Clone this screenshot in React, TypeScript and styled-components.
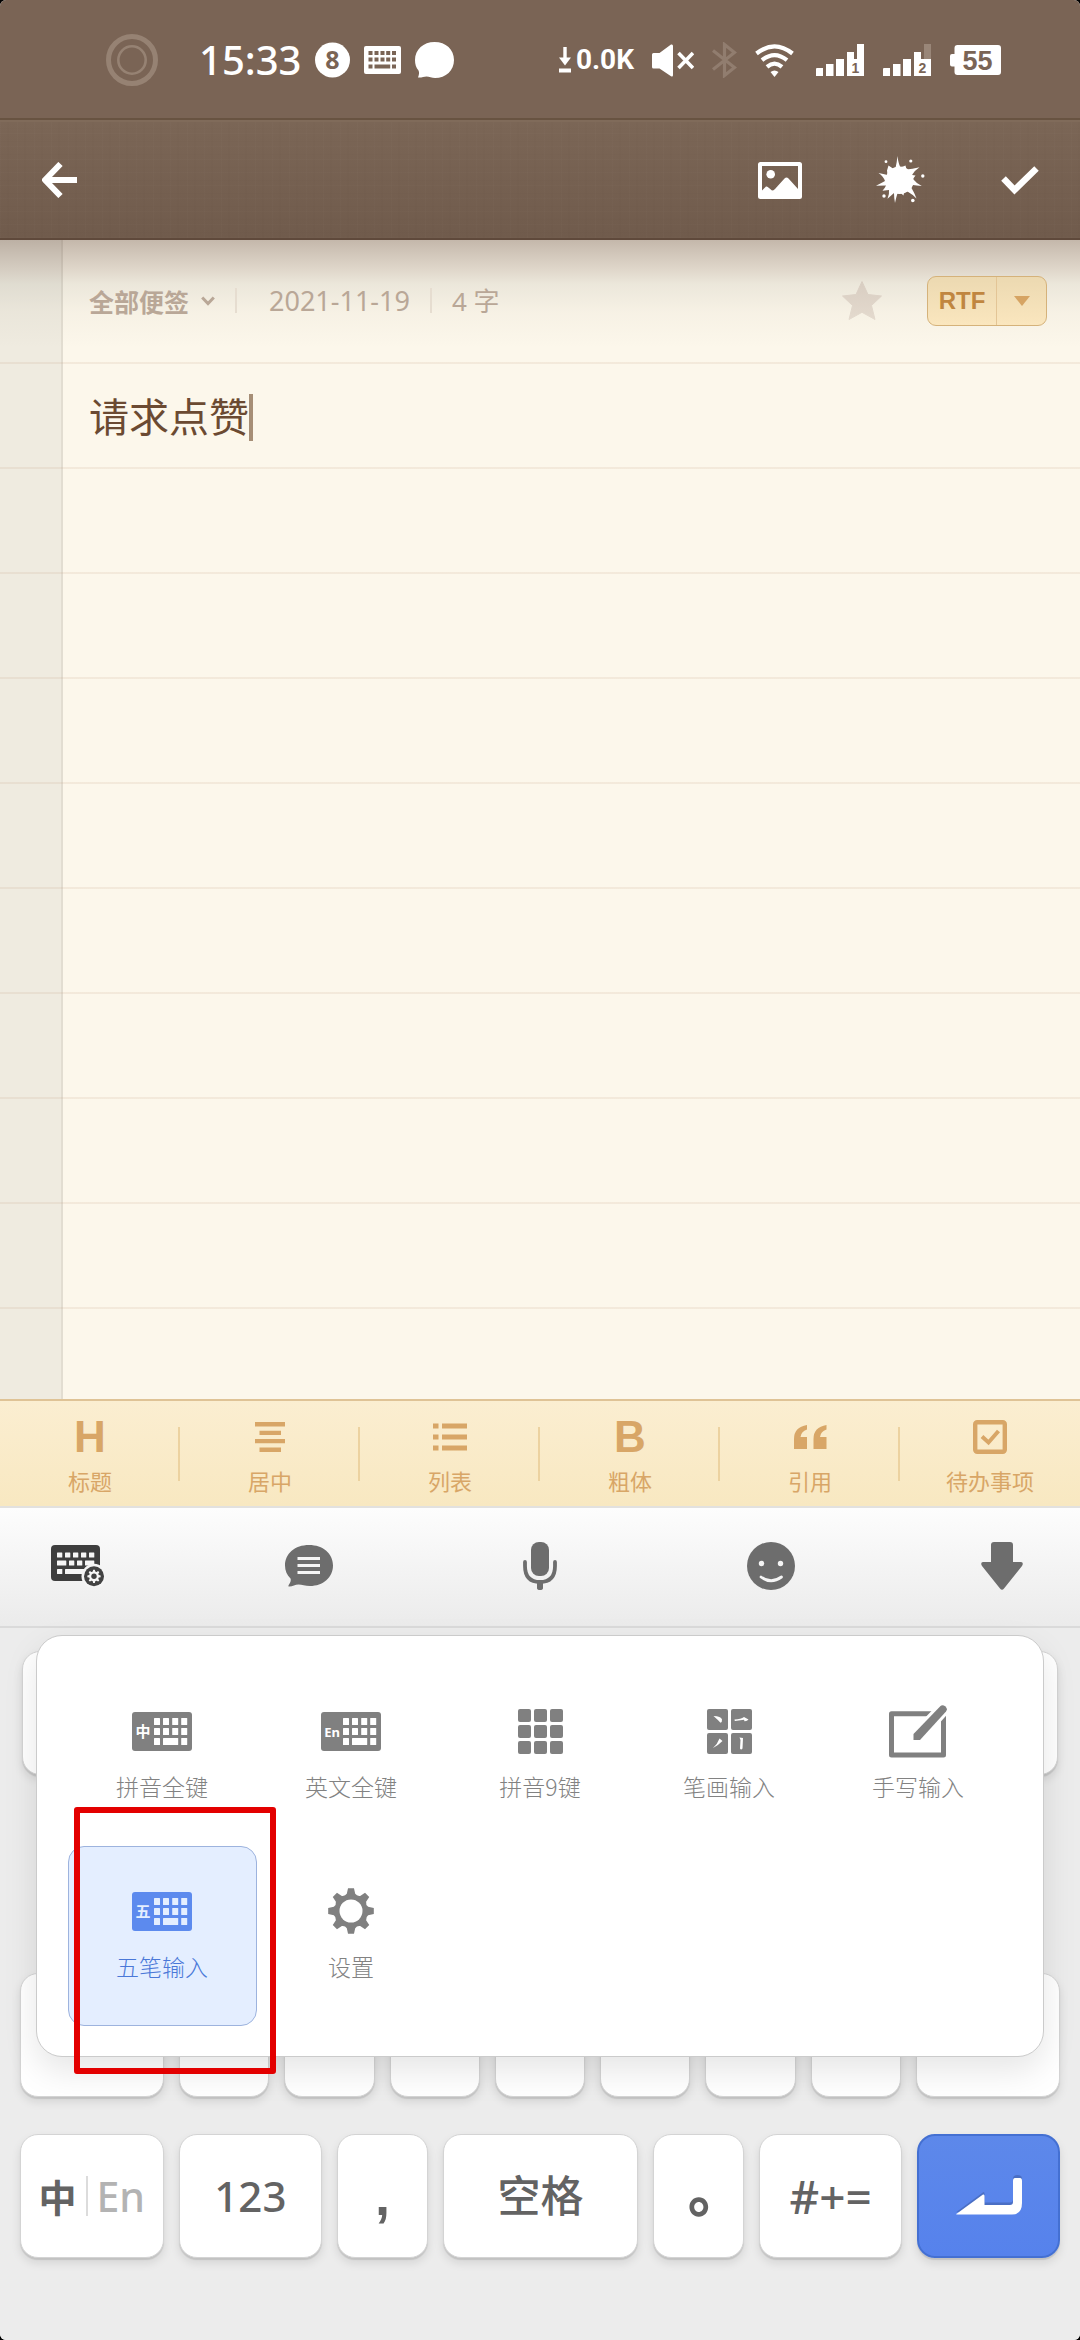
import React from "react";
import styled, { createGlobalStyle } from "styled-components";

const SANS = '"Noto Sans", "Noto Sans CJK SC", sans-serif';
const CJK = '"Noto Sans CJK SC", "Noto Sans", sans-serif';
const ARIAL = '"Liberation Sans", "Noto Sans CJK SC", sans-serif';

const GlobalStyle = createGlobalStyle`
  *, *::before, *::after { box-sizing: border-box; }
  html, body { margin: 0; padding: 0; background: #000; }
  body { font-family: ${SANS}; }
  button {
    margin: 0; padding: 0; border: 0; background: none;
    color: inherit; font: inherit; cursor: pointer;
  }
  svg { display: block; flex: none; }
`;

const Screen = styled.div`
  position: relative;
  display: flex;
  flex-direction: column;
  min-height: 100vh;
  border-radius: 6px;
  overflow: hidden;
  background: #ececec;
`;

/* ---------- status bar ---------- */

const StatusBar = styled.header`
  display: flex;
  align-items: center;
  justify-content: space-between;
  height: 120px;
  padding: 2px 79px 0 106px;
  background: #7a6455;
  border-bottom: 2px solid #685341;
  color: #fff;
`;

const StatusGroup = styled.div<{ $gap: number }>`
  display: flex;
  align-items: center;
  gap: ${(p) => p.$gap}px;
`;

const Clock = styled.time`
  font-size: 40px;
  line-height: 48px;
  font-weight: 500;
`;

const Speed = styled.span`
  display: flex;
  align-items: center;
  gap: 5px;
  font-family: Roboto, sans-serif;
  font-size: 28px;
  line-height: 32px;
  font-weight: 700;
`;

/* ---------- app toolbar ---------- */

const Toolbar = styled.nav`
  display: flex;
  justify-content: space-between;
  height: 120px;
  border-top: 2px solid #806b5a;
  border-bottom: 2px solid #5f493b;
  background:
    repeating-linear-gradient(90deg, rgba(255, 255, 255, 0.012) 0 1px, transparent 1px 7px, rgba(0, 0, 0, 0.012) 7px 9px, transparent 9px 17px),
    repeating-linear-gradient(0deg, rgba(255, 255, 255, 0.012) 0 1px, transparent 1px 5px, rgba(0, 0, 0, 0.012) 5px 6px, transparent 6px 13px),
    linear-gradient(#7b6656, #705b4c);
`;

const ToolbarActions = styled.div`
  display: flex;
`;

const ToolbarButton = styled.button`
  display: flex;
  align-items: center;
  justify-content: center;
  width: 120px;
  color: #fff;
`;

/* ---------- note ---------- */

const Paper = styled.main`
  flex: 1;
  padding-left: 89px;
  background:
    linear-gradient(
      rgba(112, 88, 74, 0.4) 0,
      rgba(112, 88, 74, 0.3) 14px,
      rgba(112, 88, 74, 0.2) 30px,
      rgba(90, 90, 74, 0.1) 44px,
      rgba(112, 100, 74, 0.04) 72px,
      transparent 108px
    ),
    repeating-linear-gradient(transparent 0 17px, rgba(190, 150, 120, 0.14) 17px 19px, transparent 19px 105px) 0 105px no-repeat,
    linear-gradient(90deg, #efebe0 61px, #e2ddd1 61px 63px, #fcf7eb 63px);
`;

const MetaRow = styled.div`
  display: flex;
  align-items: center;
  justify-content: space-between;
  height: 123px;
  padding: 0 33px 2px 0;
  color: #b9a797;
`;

const MetaInfo = styled.div`
  display: flex;
  align-items: center;
  font-size: 26px;
  line-height: 32px;
`;

const FolderButton = styled.button`
  display: flex;
  align-items: center;
  gap: 12px;
  margin-right: 20px;
  font-family: ${CJK};
  font-size: 25px;
  line-height: 32px;
  font-weight: 700;
`;

const Rule = styled.i`
  width: 2px;
  height: 25px;
  background: #e6ddd0;
`;

const DateText = styled.time`
  padding: 0 20px 0 32px;
  font-size: 27px;
`;

const CountText = styled.span`
  padding-left: 20px;
`;

const MetaActions = styled.div`
  display: flex;
  align-items: center;
  gap: 45px;
`;

const FormatSwitch = styled.div`
  display: flex;
  width: 120px;
  height: 50px;
  border: 1px solid #d5b27a;
  border-radius: 9px;
  background: linear-gradient(#ecd9b1, #fae6be);
`;

const FormatName = styled.button`
  flex: 1;
  border-right: 1px solid #e3c596;
  color: #c08640;
  font-family: ${ARIAL};
  font-size: 24px;
  line-height: 28px;
  font-weight: 700;
`;

const FormatMore = styled.button`
  display: flex;
  align-items: center;
  justify-content: center;
  width: 49px;
`;

const NoteLine = styled.div`
  display: flex;
  align-items: center;
  height: 105px;
  padding-top: 3px;
`;

const NoteText = styled.textarea`
  display: block;
  width: 160px;
  height: 60px;
  margin: 0;
  padding: 0;
  border: 0;
  outline: 0;
  resize: none;
  overflow: hidden;
  background: none;
  color: #6b4a32;
  font-family: ${CJK};
  font-size: 40px;
  line-height: 56px;
  white-space: nowrap;
`;

const Caret = styled.i`
  width: 4px;
  height: 47px;
  background: #a68e76;
`;

/* ---------- formatting bar ---------- */

const FormatBar = styled.div`
  display: grid;
  grid-template-columns: repeat(6, 1fr);
  height: 109px;
  border-top: 2px solid #dfc396;
  border-bottom: 2px solid #e2e1df;
  background: linear-gradient(#fbeed1, #f8e8c1);
`;

const FormatTool = styled.button`
  display: flex;
  flex-direction: column;
  align-items: center;
  gap: 13px;
  padding-top: 20px;
  color: #d8a667;
  background: linear-gradient(#ecd2a0, #ecd2a0) right center / 2px 54px no-repeat;

  &:last-child {
    background: none;
  }
`;

const ToolGlyph = styled.span`
  display: flex;
  align-items: center;
  justify-content: center;
  height: 32px;
  font-family: ${ARIAL};
  font-size: 44px;
  line-height: 32px;
  font-weight: 700;
`;

const ToolLabel = styled.span`
  font-family: ${CJK};
  font-size: 22px;
  line-height: 28px;
`;

/* ---------- input method ---------- */

const ImeBar = styled.div`
  display: flex;
  align-items: center;
  justify-content: space-between;
  height: 120px;
  padding: 0 48px 2px;
  border-bottom: 2px solid #dadada;
  background: linear-gradient(#fdfdfd, #ebebeb);
`;

const ImeButton = styled.button`
  display: flex;
  align-items: center;
  justify-content: center;
  width: 60px;
  height: 60px;
`;

const Keyboard = styled.section`
  position: relative;
  display: flex;
  flex-direction: column;
  gap: 37px;
  padding: 23px 20px 82px;
  background: #ececec;
`;

const KeyRow = styled.div<{ $inset?: number }>`
  display: flex;
  gap: 15px;
  padding: 0 ${(p) => p.$inset ?? 0}px;
`;

const Key = styled.button<{ $grow?: number; $accent?: boolean; $size?: number }>`
  display: flex;
  align-items: center;
  justify-content: center;
  flex: ${(p) => p.$grow ?? 90} 1 0;
  height: 124px;
  border: ${(p) => (p.$accent ? "2px solid #4470d2" : "1px solid #d4d4d4")};
  border-radius: 18px;
  background: ${(p) => (p.$accent ? "linear-gradient(#5d88ea, #5682ec)" : "#fff")};
  box-shadow: 0 2px 1px rgba(0, 0, 0, 0.1), 0 5px 10px rgba(0, 0, 0, 0.1);
  color: #636363;
  font-size: ${(p) => p.$size ?? 42}px;
  line-height: 56px;
  font-weight: 500;
`;

const LetterKey = styled(Key)`
  padding-top: 12px;
`;

const LanguageKey = styled.span`
  display: flex;
  align-items: center;
  gap: 9px;
  font-size: 41px;
`;

const Chinese = styled.span`
  font-family: ${CJK};
  font-size: 38px;
  font-weight: 700;
`;

const English = styled.span`
  color: #b3b3b3;
`;

const LanguageRule = styled.i`
  width: 2px;
  height: 40px;
  background: #dcdcdc;
`;

const Comma = styled.span`
  font-family: ${ARIAL};
  font-size: 54px;
  font-weight: 700;
`;

const FullStop = styled.span`
  width: 21px;
  padding-bottom: 18px;
  font-family: ${CJK};
  font-size: 56px;
  font-weight: 900;
`;

const ModePanel = styled.div`
  position: absolute;
  top: 7px;
  left: 36px;
  right: 36px;
  display: grid;
  grid-template-columns: repeat(5, 189px);
  justify-content: center;
  grid-auto-rows: 180px;
  padding: 30px;
  border: 1px solid #cbcbcb;
  border-radius: 26px;
  background: #fff;
  box-shadow: 0 14px 34px rgba(0, 0, 0, 0.1);
`;

const Mode = styled.button<{ $active?: boolean }>`
  display: flex;
  flex-direction: column;
  align-items: center;
  gap: 10px;
  padding-top: 34px;
  border: 1px solid ${(p) => (p.$active ? "#9db3de" : "transparent")};
  border-radius: 16px;
  background: ${(p) => (p.$active ? "#e4eeff" : "transparent")};
  color: ${(p) => (p.$active ? "#5c8aee" : "#808080")};
`;

const ModeIcon = styled.span`
  display: flex;
  align-items: center;
  justify-content: center;
  height: 60px;
`;

const ModeLabel = styled.span<{ $active?: boolean }>`
  color: ${(p) => (p.$active ? "#4a78d8" : "#828282")};
  font-family: ${CJK};
  font-size: 23px;
  line-height: 30px;
  font-weight: 300;
`;

const Highlight = styled.div`
  position: absolute;
  left: 74px;
  top: 179px;
  width: 202px;
  height: 267px;
  border: 6px solid #e30000;
  border-radius: 3px;
  pointer-events: none;
`;

/* ---------- icons ---------- */

const RingIcon = () => (
  <svg width="52" height="52" viewBox="0 0 52 52" fill="none" stroke="#968273">
    <circle cx="26" cy="26" r="23.5" strokeWidth="5" />
    <circle cx="26" cy="26" r="13.7" strokeWidth="2.6" />
  </svg>
);

const CountBadge = () => (
  <svg width="35" height="36" viewBox="0 0 35 36">
    <circle cx="17.5" cy="18" r="17.5" fill="#fff" />
    <text x="17.5" y="27" textAnchor="middle" fontFamily="Noto Sans, sans-serif" fontSize="25" fontWeight="700" fill="#7a6455">8</text>
  </svg>
);

const StatusKeyboard = () => (
  <svg width="37" height="28" viewBox="0 0 37 28">
    <rect width="37" height="28" rx="2" fill="#fff" />
    <g fill="#7a6455">
      {[4.5, 10.5, 16.5, 22.2, 28].map((x) => (
        <React.Fragment key={x}>
          <rect x={x} y="5" width="4" height="4" />
          <rect x={x} y="11.5" width="4" height="4" />
        </React.Fragment>
      ))}
      <rect x="4.5" y="18.5" width="4" height="4" />
      <rect x="10.5" y="18.5" width="15.7" height="4" />
      <rect x="28" y="18.5" width="4" height="4" />
    </g>
  </svg>
);

const StatusBubble = () => (
  <svg width="39" height="36" viewBox="0 0 39 36" fill="#fff">
    <path d="M19.5 0C31 0 39 7.5 39 18S31 36 20 36C17 36 14 34.500 11.500 34.500C9 34.500 6 36 3 35.500C4 33 4.500 30 3.500 28.500C1 25.500 0 22 0 18C0 7.500 8.500 0 19.500 0Z" />
  </svg>
);

const DownloadIcon = () => (
  <svg width="12" height="26" viewBox="0 0 12 26">
    <path d="M4.300 0h3.400v10.500H12L6 18.500L0 10.500h4.300ZM0 21.500h12v4H0Z" fill="#fff" />
  </svg>
);

const MuteIcon = () => (
  <svg width="42" height="33" viewBox="0 0 42 33" fill="#fff">
    <path d="M0 10.500Q0 9 1.500 9H7.500L19 .6Q21 -.2 21 2V31Q21 33.200 19 32.200L7.500 24.500H1.500Q0 24.500 0 23Z" />
    <path d="M26.500 9L41 24M41 9L26.500 24" stroke="#fff" strokeWidth="3.6" />
  </svg>
);

const BluetoothIcon = () => (
  <svg width="25" height="36" viewBox="0 0 25 36" fill="none" stroke="#917d6f" strokeWidth="3.2">
    <path d="M1 8.500L22.500 25.500L12.500 33.500V2.500L22.500 10.500L1 27.500" />
  </svg>
);

const WifiIcon = () => (
  <svg width="39" height="33" viewBox="0 0 39 33" fill="none" stroke="#fff" strokeWidth="4.2">
    <path d="M1.500 9.500Q19.500 -4.800 37.500 9.500" />
    <path d="M7 16.200Q19.500 6 32 16.200" />
    <path d="M12 22.800Q19.500 16.500 27 22.800" />
    <path d="M15.500 28L19.500 33L23.500 28Q19.500 25 15.500 28Z" fill="#fff" stroke="none" />
  </svg>
);

const SignalIcon = ({ sim, weak }: { sim: string; weak?: boolean }) => (
  <svg width="48" height="32" viewBox="0 0 48 32">
    <path d="M0 25Q0 24 1 24H7V32H0ZM10 20H17.500V32H10ZM20 15H28V32H20ZM31 8H38V15H48V32H31Z" fill="#fff" />
    <path d="M41 0H48V15H41Z" fill={weak ? "#998678" : "#fff"} />
    <text x="39.5" y="29" textAnchor="middle" fontFamily="Liberation Sans, sans-serif" fontSize="14" fontWeight="700" fill="#7a6455">
      {sim}
    </text>
  </svg>
);

const BatteryIcon = () => (
  <svg width="51" height="30" viewBox="0 0 51 30">
    <path d="M4.500 3Q4.500 0 7.500 0H48Q51 0 51 3V27Q51 30 48 30H7.500Q4.500 30 4.500 27V21.500H2Q0 21.500 0 19.500V11Q0 9 2 9H4.500Z" fill="#fff" />
    <text x="27.5" y="25" textAnchor="middle" fontFamily="Liberation Sans, sans-serif" fontSize="27" fontWeight="700" fill="#7a6455">55</text>
  </svg>
);

const BackIcon = () => (
  <svg width="36" height="36" viewBox="0 0 36 36" fill="none" stroke="#fff" strokeWidth="6">
    <path d="M35 18H5M18.500 2L3 18L18.500 34" strokeLinejoin="round" />
  </svg>
);

const PictureIcon = () => (
  <svg width="44" height="37" viewBox="0 0 44 37">
    <path fillRule="evenodd" fill="#fff" d="M2.500 0H41.500Q44 0 44 2.500V34.500Q44 37 41.500 37H2.500Q0 37 0 34.500V2.500Q0 0 2.500 0ZM4 4V28.500L8 24.500Q9.500 24 11 26L14 28.500Q15.500 28.500 17 27L26.500 16.500Q28.500 14.500 30.500 16.500L40 27V4Z" />
    <circle cx="12.7" cy="12.3" r="4.3" fill="#fff" />
  </svg>
);

const SplatIcon = () => (
  <svg width="49" height="48" viewBox="0 0 49 48" fill="#fff">
    <circle cx="23.5" cy="24.3" r="13.8" />
    <path d="M21.400 0Q22.500 8 24.500 11.500L29.500 9.500L30.500 13.500Q36 13 43.500 11.300Q38 15 36 19L39.500 19.500L37 23Q40 27 45.800 30Q40 29.500 37 29L35.500 32Q38.500 37 40.500 42.500Q36 38 31.500 35.500L28 36.500L27.500 39.500L25 37.300L21.500 37.300Q20 42 19 47Q18 42 18 37L11.500 42.800Q13.500 38 13 34L6.500 34.800Q9 32 10 29.500Q5 29.500 0 29.800Q5.500 27 9 25Q7.500 20.500 2.500 17Q7.500 18 11.500 19L11 14.500L12.500 9.500L17 12.500L19.500 12Q21 6 21.400 0Z" />
    <circle cx="10" cy="5.7" r="1.4" />
    <circle cx="34.8" cy="5" r="1.6" />
    <circle cx="46.8" cy="20" r="1.7" />
    <circle cx="8" cy="40" r="1.7" />
    <circle cx="36.8" cy="44.5" r="1.8" />
  </svg>
);

const CheckIcon = () => (
  <svg width="38" height="29" viewBox="0 0 38 29" fill="none" stroke="#fff" strokeWidth="6.4">
    <path d="M2.500 12.500L13.500 24L35.500 2.500" />
  </svg>
);

const ChevronIcon = () => (
  <svg width="14" height="10" viewBox="0 0 14 10" fill="none" stroke="#b9a797" strokeWidth="3">
    <path d="M1.200 1.500L7 7.500L12.800 1.500" />
  </svg>
);

const StarIcon = () => (
  <svg width="40" height="39" viewBox="0 0 40 39">
    <defs>
      <linearGradient id="star" x1="0" y1="0" x2="0" y2="1">
        <stop offset="0" stopColor="#d8cdc1" />
        <stop offset="1" stopColor="#e4dace" />
      </linearGradient>
    </defs>
    <path d="M20 0.500L26 13.500L39.500 15L29.500 24.500L33 38.500L20 31.300L7 38.500L10.500 24.500L.5 15L14 13.500Z" fill="url(#star)" stroke="url(#star)" strokeLinejoin="round" />
  </svg>
);

const TriangleIcon = () => (
  <svg width="16" height="10" viewBox="0 0 16 10" fill="#d6a463">
    <path d="M0 0H16L8 10Z" />
  </svg>
);

const CenterIcon = () => (
  <svg width="30" height="30" viewBox="0 0 30 30" fill="currentColor">
    <path d="M0 0H30V4.500H0ZM4.500 8.700H26V13H4.500ZM0 17H30V21.300H0ZM4.500 25.500H26V30H4.500Z" />
  </svg>
);

const ListIcon = () => (
  <svg width="34" height="28" viewBox="0 0 34 28" fill="currentColor">
    <path d="M0 .5H5.500V5.500H0ZM9 .5H34V5.500H9ZM0 11.500H5.500V16.500H0ZM9 11.500H34V16.500H9ZM0 22.500H5.500V27.500H0ZM9 22.500H34V27.500H9Z" />
  </svg>
);

const QuoteIcon = () => (
  <svg width="33" height="26" viewBox="0 0 33 26" fill="currentColor">
    <path d="M0 25V15Q0 3 13 1V5.500Q7 7.500 6.500 13H13V25ZM19.500 25V15Q19.500 3 32.500 1V5.500Q26.500 7.500 26 13H32.500V25Z" />
  </svg>
);

const TodoIcon = () => (
  <svg width="34" height="34" viewBox="0 0 34 34" fill="none" stroke="currentColor">
    <rect x="2.200" y="2.200" width="29.6" height="29.6" rx="2" strokeWidth="4.4" />
    <path d="M9 16.500L15.500 22.500L25.500 11" strokeWidth="4" />
  </svg>
);

const gearPath = (cx: number, cy: number, outer: number, inner: number) => {
  const points: string[] = [];
  for (let i = 0; i < 8; i++) {
    const a = (i * Math.PI) / 4;
    const at = (r: number, d: number) =>
      `${(cx + r * Math.sin(a + d)).toFixed(2)} ${(cy - r * Math.cos(a + d)).toFixed(2)}`;
    points.push(`${i ? "L" : "M"}${at(outer, -0.13)}L${at(outer, 0.13)}`);
    points.push(`L${at(inner * 1.04, 0.24)}Q${at(inner * 0.93, 0.3927)} ${at(inner * 1.04, 0.545)}`);
  }
  return points.join("") + "Z";
};

const ImeKeyboardIcon = () => (
  <svg width="54" height="42" viewBox="0 0 54 42">
    <rect width="49" height="36" rx="4" fill="#3e3e3e" />
    <g fill="#f6f6f6">
      {[6, 14, 22, 30, 38].map((x) => (
        <rect key={x} x={x} y="7.5" width="5.3" height="5" rx="0.5" />
      ))}
      <rect x="6" y="15.5" width="9.3" height="5" rx="0.5" />
      <rect x="18" y="15.5" width="5.3" height="5" rx="0.5" />
      <rect x="26" y="15.5" width="5.3" height="5" rx="0.5" />
      <rect x="34" y="15.5" width="9.3" height="5" rx="0.5" />
      <rect x="6" y="24" width="5.3" height="5" rx="0.5" />
      <rect x="14" y="24" width="20" height="5" rx="0.5" />
      <circle cx="43" cy="31.3" r="12.5" fill="#f4f4f4" />
    </g>
    <circle cx="43" cy="31.3" r="10" fill="#424242" />
    <path d={gearPath(43, 31.3, 6.7, 4.9)} fill="#f6f6f6" />
    <circle cx="43" cy="31.3" r="2.7" fill="#424242" />
  </svg>
);

const PhraseIcon = () => (
  <svg width="48" height="42" viewBox="0 0 48 42">
    <path d="M24 0C38 0 48 8.500 48 20.500S38 41 25 41C20 41 17 39.500 13.500 39.500C10 39.500 7 42 3.500 41.500Q3 41 4 39.500Q6.500 36 5.500 33.500C2 30 0 26 0 20.500C0 8.500 10 0 24 0Z" fill="#6d6d6d" />
    <path d="M12.500 13.500H35M12.500 20.500H35M12.500 27.500H35" stroke="#f5f5f5" strokeWidth="3.2" />
  </svg>
);

const MicIcon = () => (
  <svg width="36" height="48" viewBox="0 0 36 48" fill="#6d6d6d">
    <rect x="9" width="18" height="34" rx="8" />
    <path d="M3 20V24Q3 40 18 40Q33 40 33 24V20" fill="none" stroke="#6d6d6d" strokeWidth="3.8" strokeLinecap="round" />
    <path d="M15 40H21V46Q21 48 18 48Q15 48 15 46Z" />
  </svg>
);

const SmileIcon = () => (
  <svg width="48" height="48" viewBox="0 0 48 48">
    <circle cx="24" cy="24" r="24" fill="#6d6d6d" />
    <circle cx="14.5" cy="21.5" r="2.7" fill="#f5f5f5" />
    <circle cx="33.5" cy="21.5" r="2.7" fill="#f5f5f5" />
    <path d="M14 35Q24 42.500 34.500 35" fill="none" stroke="#f5f5f5" strokeWidth="2.8" strokeLinecap="round" />
  </svg>
);

const HideIcon = () => (
  <svg width="42" height="48" viewBox="0 0 42 48" fill="#6d6d6d">
    <path d="M13 0H29Q32 0 32 3V20H40Q43 20.500 41 24L23 46.500Q21 49 19 46.500L1 24Q-1 20.500 2 20H10V3Q10 0 13 0Z" />
  </svg>
);

const BoardIcon = ({ mark, hole }: { mark: string; hole: string }) => (
  <svg width="60" height="39" viewBox="0 0 60 39">
    <rect width="60" height="39" rx="3" fill="currentColor" />
    <g fill={hole}>
      {[22, 31, 40.2, 49.2].map((x) => (
        <React.Fragment key={x}>
          <rect x={x} y="6" width="6" height="7" rx="0.5" />
          <rect x={x} y="16" width="6" height="7" rx="0.5" />
        </React.Fragment>
      ))}
      <rect x="22" y="26" width="6" height="7" rx="0.5" />
      <rect x="31" y="26" width="15.2" height="7" rx="0.5" />
      <rect x="49.2" y="26" width="6" height="7" rx="0.5" />
      <text x="11" y="24.5" textAnchor="middle" fontFamily="Noto Sans, Noto Sans CJK SC, sans-serif" fontSize={mark === "En" ? 13 : 15} fontWeight="700">
        {mark}
      </text>
    </g>
  </svg>
);

const NineKeyIcon = () => (
  <svg width="45" height="45" viewBox="0 0 45 45" fill="currentColor">
    {[0, 16, 32].map((y) => [0, 16, 32].map((x) => <rect key={`${x}-${y}`} x={x} y={y} width="13" height="13" rx="2" />))}
  </svg>
);

const StrokeIcon = () => (
  <svg width="45" height="45" viewBox="0 0 45 45">
    {[0, 24].map((y) => [0, 24].map((x) => <rect key={`${x}-${y}`} x={x} y={y} width="21" height="21" rx="2" fill="currentColor" />))}
    <g fill="#fff">
      <path d="M6.500 7Q14 7 15 10.500Q15.200 13.500 13.500 13.700Q11 11 6.500 7Z" />
      <path d="M27.500 10.500Q34 10 37 8L41.500 10.500Q40 12.500 37.500 12.300L37 10.700L28 12Q27.500 11.500 27.500 10.500Z" />
      <path d="M12.500 29.500L15.500 32Q11 36.500 6 39Q10.500 35 12.500 29.500Z" />
      <path d="M32.500 28.500L36 29L35.500 39.500Q34 41.500 33 39.500L33.500 31Z" />
    </g>
  </svg>
);

const PEN = "M51.500 1Q53.500 -.5 56.500 1.500Q59 4 57 6.500L31 35H24.500V29Z";

const HandwriteIcon = () => (
  <svg width="58" height="53" viewBox="0 0 58 53" fill="none">
    <path d="M44 8.700H2.500V50H54.500V10" stroke="currentColor" strokeWidth="5" strokeLinejoin="round" />
    <path d={PEN} fill="#fff" stroke="#fff" strokeWidth="6" />
    <path d={PEN} fill="currentColor" />
  </svg>
);

const GearIcon = () => (
  <svg width="46" height="46" viewBox="0 0 46 46">
    <path d={gearPath(23, 23, 23, 17)} fill="currentColor" />
    <circle cx="23" cy="23" r="11.5" fill="#fff" />
  </svg>
);

const ReturnIcon = () => (
  <svg width="66" height="42" viewBox="0 0 66 42">
    <path d="M1 36.500L27.500 17Q28.500 17 28.500 18.500V27.500H54Q57 27.500 57 24.500V3.500Q57 0 61.500 0Q66 0 66 3.500V26Q66 37 56 37H1.500Q0 37 0 38Z" fill="#4a6fc4" />
    <path d="M1 38.500L27 19.500Q28.500 19 28.500 21V30H54Q57 30 57 27V6Q57 3 59 3H64Q66 3 66 6V28Q66 39.500 56 39.500H2Q-1 39.500 1 38.500Z" fill="#fff" />
  </svg>
);

/* ---------- data ---------- */

const formatTools = [
  { label: "标题", icon: "H" },
  { label: "居中", icon: <CenterIcon /> },
  { label: "列表", icon: <ListIcon /> },
  { label: "粗体", icon: "B" },
  { label: "引用", icon: <QuoteIcon /> },
  { label: "待办事项", icon: <TodoIcon /> },
];

const modes = [
  { label: "拼音全键", icon: <BoardIcon mark="中" hole="#fff" /> },
  { label: "英文全键", icon: <BoardIcon mark="En" hole="#fff" /> },
  { label: "拼音9键", icon: <NineKeyIcon /> },
  { label: "笔画输入", icon: <StrokeIcon /> },
  { label: "手写输入", icon: <HandwriteIcon /> },
  { label: "五笔输入", icon: <BoardIcon mark="五" hole="#e4eeff" />, active: true },
  { label: "设置", icon: <GearIcon /> },
];

const blankKeys = (count: number) => Array.from({ length: count }, (_, i) => <Key key={i} tabIndex={-1} />);

export default function App() {
  return (
    <>
      <GlobalStyle />
      <Screen>
        <StatusBar>
          <StatusGroup $gap={41}>
            <RingIcon />
            <StatusGroup $gap={14}>
              <Clock>15:33</Clock>
              <CountBadge />
              <StatusKeyboard />
              <StatusBubble />
            </StatusGroup>
          </StatusGroup>
          <StatusGroup $gap={22}>
            <StatusGroup $gap={18}>
              <Speed>
                <DownloadIcon />
                0.0K
              </Speed>
              <MuteIcon />
              <BluetoothIcon />
              <WifiIcon />
            </StatusGroup>
            <StatusGroup $gap={19}>
              <SignalIcon sim="1" />
              <SignalIcon sim="2" weak />
              <BatteryIcon />
            </StatusGroup>
          </StatusGroup>
        </StatusBar>

        <Toolbar>
          <ToolbarButton aria-label="返回"><BackIcon /></ToolbarButton>
          <ToolbarActions>
            <ToolbarButton aria-label="图片"><PictureIcon /></ToolbarButton>
            <ToolbarButton aria-label="皮肤"><SplatIcon /></ToolbarButton>
            <ToolbarButton aria-label="完成"><CheckIcon /></ToolbarButton>
          </ToolbarActions>
        </Toolbar>

        <Paper>
          <MetaRow>
            <MetaInfo>
              <FolderButton>
                全部便签
                <ChevronIcon />
              </FolderButton>
              <Rule />
              <DateText>2021-11-19</DateText>
              <Rule />
              <CountText>4 字</CountText>
            </MetaInfo>
            <MetaActions>
              <button aria-label="收藏"><StarIcon /></button>
              <FormatSwitch>
                <FormatName>RTF</FormatName>
                <FormatMore aria-label="格式"><TriangleIcon /></FormatMore>
              </FormatSwitch>
            </MetaActions>
          </MetaRow>
          <NoteLine>
            <NoteText aria-label="便签内容" rows={1} defaultValue="请求点赞" />
            <Caret />
          </NoteLine>
        </Paper>

        <FormatBar>
          {formatTools.map((tool) => (
            <FormatTool key={tool.label}>
              <ToolGlyph>{tool.icon}</ToolGlyph>
              <ToolLabel>{tool.label}</ToolLabel>
            </FormatTool>
          ))}
        </FormatBar>

        <ImeBar>
          <ImeButton aria-label="键盘设置"><ImeKeyboardIcon /></ImeButton>
          <ImeButton aria-label="常用语"><PhraseIcon /></ImeButton>
          <ImeButton aria-label="语音"><MicIcon /></ImeButton>
          <ImeButton aria-label="表情"><SmileIcon /></ImeButton>
          <ImeButton aria-label="收起"><HideIcon /></ImeButton>
        </ImeBar>

        <Keyboard>
          <KeyRow $inset={2}>{blankKeys(10)}</KeyRow>
          <KeyRow $inset={54}>{blankKeys(9)}</KeyRow>
          <KeyRow>
            <Key $grow={145} tabIndex={-1} />
            {["Z", "X", "C", "V", "B", "N", "M"].map((letter) => (
              <LetterKey key={letter}>{letter}</LetterKey>
            ))}
            <Key $grow={145} tabIndex={-1} />
          </KeyRow>
          <KeyRow>
            <Key $grow={144}>
              <LanguageKey>
                <Chinese>中</Chinese>
                <LanguageRule />
                <English>En</English>
              </LanguageKey>
            </Key>
            <Key $grow={144}>123</Key>
            <Key><Comma>,</Comma></Key>
            <Key $grow={197} $size={43}>空格</Key>
            <Key><FullStop>。</FullStop></Key>
            <Key $grow={144} $size={46}>#+=</Key>
            <Key $grow={141} $accent aria-label="换行"><ReturnIcon /></Key>
          </KeyRow>

          <ModePanel>
            {modes.map((mode) => (
              <Mode key={mode.label} $active={mode.active}>
                <ModeIcon>{mode.icon}</ModeIcon>
                <ModeLabel $active={mode.active}>{mode.label}</ModeLabel>
              </Mode>
            ))}
          </ModePanel>
          <Highlight />
        </Keyboard>
      </Screen>
    </>
  );
}
